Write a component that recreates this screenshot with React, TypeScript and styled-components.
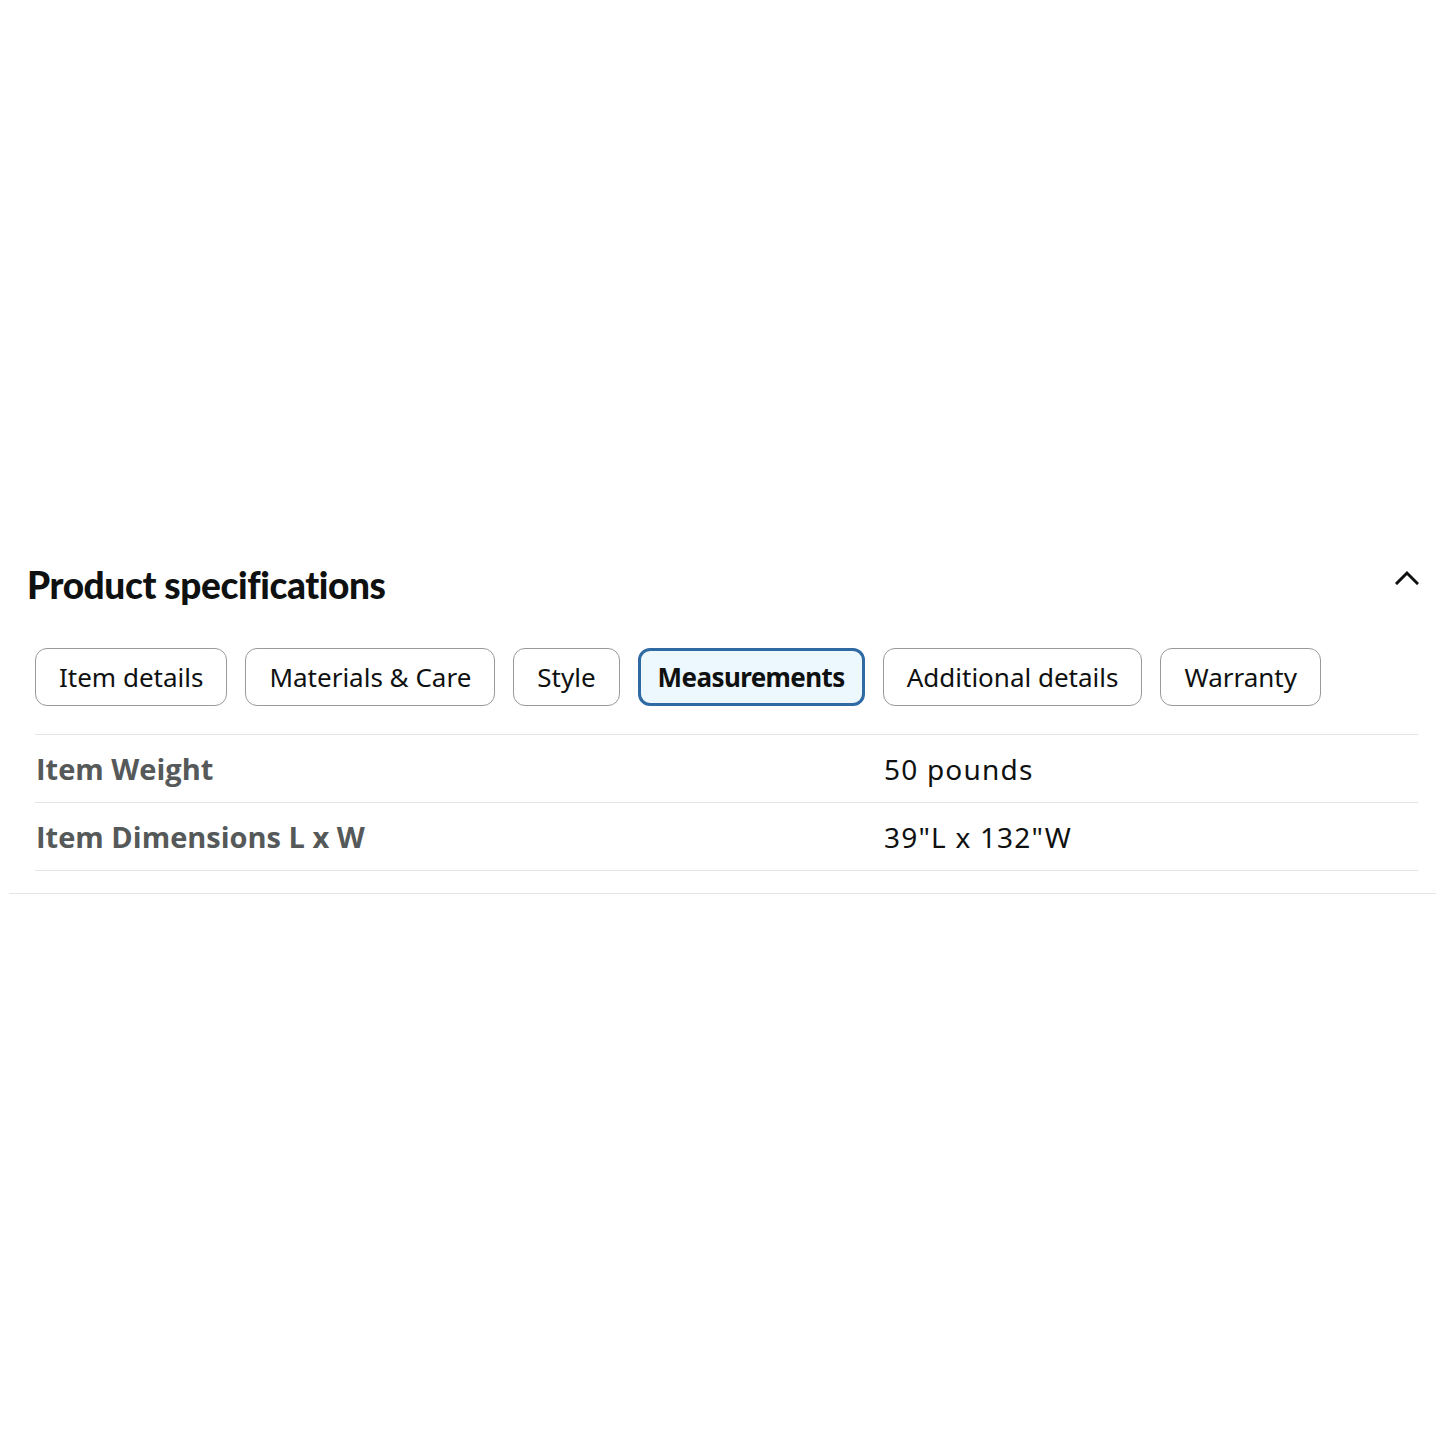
import React, { useState } from "react";
import styled, { createGlobalStyle } from "styled-components";

const tabs = [
  "Item details",
  "Materials & Care",
  "Style",
  "Measurements",
  "Additional details",
  "Warranty",
];

const specs = [
  { label: "Item Weight", value: "50 pounds" },
  { label: "Item Dimensions L x W", value: "39\"L x 132\"W" },
];

export default function App() {
  const [active, setActive] = useState("Measurements");
  const [open, setOpen] = useState(true);

  return (
    <>
      <GlobalStyle />
      <Section>
        <Header>
          <Title>Product specifications</Title>
          <Toggle onClick={() => setOpen(!open)} aria-label="Collapse">
            <svg width="24" height="16" viewBox="0 0 24 16">
              <polyline
                points="2,14 12,4 22,14"
                fill="none"
                stroke="#0f1111"
                strokeWidth="3"
                strokeLinecap="square"
              />
            </svg>
          </Toggle>
        </Header>
        {open && (
          <Body>
            <TabRow>
              {tabs.map((t) => (
                <Tab key={t} $active={t === active} onClick={() => setActive(t)}>
                  {t}
                </Tab>
              ))}
            </TabRow>
            <Table>
              {specs.map((s) => (
                <Row key={s.label}>
                  <Label>{s.label}</Label>
                  <Value>{s.value}</Value>
                </Row>
              ))}
            </Table>
          </Body>
        )}
      </Section>
    </>
  );
}

const GlobalStyle = createGlobalStyle`
  html, body {
    margin: 0;
    background: #ffffff;
  }
  body {
    font-family: "Noto Sans", "Open Sans", sans-serif;
    color: #0f1111;
  }
`;

const Section = styled.section`
  margin: 556px 9px 0;
  padding-bottom: 22px;
  border-bottom: 1px solid #e3e6e6;
`;

const Header = styled.div`
  display: flex;
  align-items: center;
  justify-content: space-between;
  padding: 0 18px;
  height: 56px;
`;

const Title = styled.h2`
  margin: 0;
  font-family: Lato, "Noto Sans", sans-serif;
  font-weight: 900;
  font-size: 37px;
  letter-spacing: -0.4px;
  color: #0f1111;
`;

const Toggle = styled.button`
  border: none;
  background: none;
  padding: 0;
  display: flex;
  margin-top: -14px;
  margin-right: -1px;
  cursor: pointer;
`;

const Body = styled.div`
  padding: 36px 18px 0 26px;
`;

const TabRow = styled.div`
  display: flex;
  gap: 18px;
  flex-wrap: wrap;
`;

const Tab = styled.button<{ $active: boolean }>`
  height: 58px;
  padding: 0 ${(p) => (p.$active ? 17 : 23)}px;
  border-radius: 12px;
  border: ${(p) => (p.$active ? "3px solid #2f6aa3" : "1px solid #999")};
  background: ${(p) => (p.$active ? "#edf7fe" : "#ffffff")};
  font-family: "Noto Sans", sans-serif;
  font-size: 26px;
  font-weight: ${(p) => (p.$active ? 700 : 400)};
  letter-spacing: ${(p) => (p.$active ? "-0.6px" : "0")};
  color: #0f1111;
  cursor: pointer;
`;

const Table = styled.div`
  margin-top: 28px;
  border-bottom: 1px solid #e3e6e6;
`;

const Row = styled.div`
  display: grid;
  grid-template-columns: 849px 1fr;
  align-items: center;
  height: 67px;
  border-top: 1px solid #e3e6e6;
`;

const Label = styled.div`
  font-family: "Open Sans", sans-serif;
  font-weight: 700;
  font-size: 29px;
  color: #565959;
  padding-left: 1px;
`;

const Value = styled.div`
  font-family: "Noto Sans", sans-serif;
  font-size: 28px;
  letter-spacing: 1.2px;
  color: #0f1111;
`;
